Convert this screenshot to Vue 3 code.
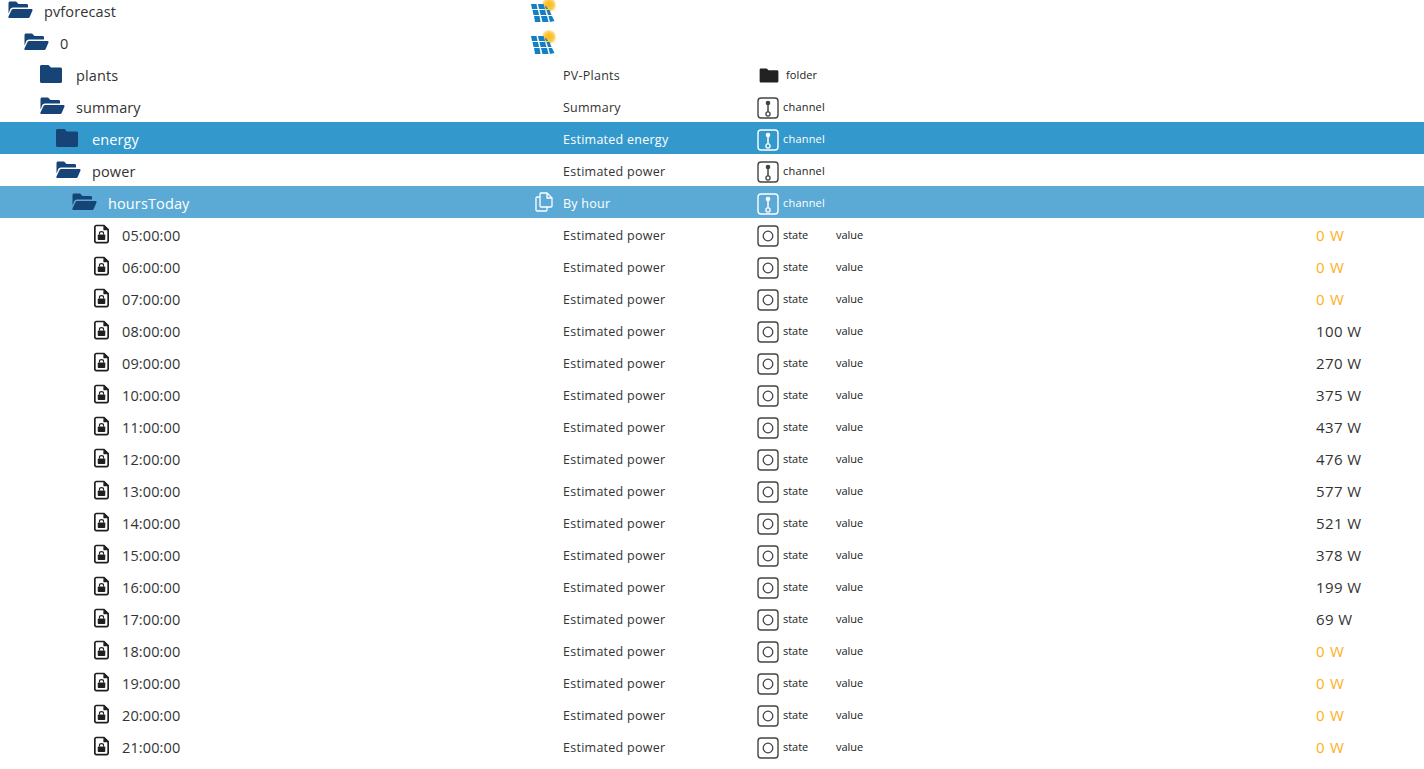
<script setup>
const folderOpen = 'M0.500 3 C0.500 2.200 1.200 1.500 2 1.500 H8 L10.500 4 H18.500 C19.500 4 20 4.700 20 5.500 V7.500 H5 C3.700 7.500 2.700 8.200 2.200 9.400 L0.500 13.500 Z M5.200 9 H23.500 C24.300 9 24.700 9.700 24.500 10.400 L21.800 16.800 C21.500 17.600 20.800 18 20 18 H1.300 C.5 18 .1 17.300 .4 16.600 L3.400 10.200 C3.800 9.400 4.500 9 5.200 9 Z'
const hours = [
  ['05:00:00', '0 W', true], ['06:00:00', '0 W', true], ['07:00:00', '0 W', true],
  ['08:00:00', '100 W'], ['09:00:00', '270 W'], ['10:00:00', '375 W'], ['11:00:00', '437 W'],
  ['12:00:00', '476 W'], ['13:00:00', '577 W'], ['14:00:00', '521 W'], ['15:00:00', '378 W'],
  ['16:00:00', '199 W'], ['17:00:00', '69 W'], ['18:00:00', '0 W', true], ['19:00:00', '0 W', true],
  ['20:00:00', '0 W', true], ['21:00:00', '0 W', true]
]
const folders = [
  { name: 'pvforecast', level: 0, open: true, logo: true },
  { name: '0', level: 1, open: true, logo: true },
  { name: 'plants', level: 2, desc: 'PV-Plants', type: 'folder' },
  { name: 'summary', level: 2, open: true, desc: 'Summary', type: 'channel' },
  { name: 'energy', level: 3, desc: 'Estimated energy', type: 'channel', cls: 'selected' },
  { name: 'power', level: 3, open: true, desc: 'Estimated power', type: 'channel' },
  { name: 'hoursToday', level: 4, open: true, desc: 'By hour', type: 'channel', cls: 'hovered', copy: true }
]
</script>

<template>
  <div class="tree">
    <div v-for="f in folders" :key="f.name" class="row" :class="f.cls">
      <div class="name-cell" :class="'level-' + f.level">
        <svg class="folder" viewBox="0 0 28 20">
          <path v-if="f.open" :d="folderOpen" />
          <path v-else d="M0 2.500 C0 1.600 .7 1 1.500 1 H8.500 L11 3.500 H20.500 C21.400 3.500 22 4.200 22 5 V17.500 C22 18.400 21.300 19 20.500 19 H1.500 C.7 19 0 18.400 0 17.500 Z" />
        </svg>
        <span class="name">{{ f.name }}</span>
      </div>
      <div class="logo-cell">
        <svg v-if="f.logo" class="logo" viewBox="0 -2 26 26">
          <defs>
            <radialGradient id="sun">
              <stop offset="0" stop-color="#fbb81f" />
              <stop offset="0.6" stop-color="#fcc63f" />
              <stop offset="1" stop-color="#fde9a8" />
            </radialGradient>
          </defs>
          <circle cx="19" cy="5" r="7" fill="url(#sun)" />
          <g fill="#1380c4">
            <path d="M1 4 H6.500 L7.500 9 H2 Z" /><path d="M8 4 H13.500 L15 9 H9 Z" /><path d="M15 6 H16 L18 9 H16 Z" />
            <path d="M2.500 10 H8 L9 15 H3.500 Z" /><path d="M9.500 10 H15 L16.500 15 H10.500 Z" /><path d="M16.500 10 H19.500 L21.500 15 H18 Z" />
            <path d="M4 16 H9.500 L10.500 22 H5 Z" /><path d="M11 16 H17 L18.500 22 H12.500 Z" /><path d="M18.500 16 H22 L24.500 21 L20 22 Z" />
          </g>
        </svg>
        <svg v-if="f.copy" class="copy" viewBox="0 0 18 20" fill="none" stroke="currentColor" stroke-width="1.300">
          <path d="M6 1 H12 L17 6 V14 C17 14.600 16.600 15 16 15 H6 C5.400 15 5 14.600 5 14 V2 C5 1.400 5.400 1 6 1 Z M12 1 V6 H17" />
          <path d="M5 5 H2 C1.400 5 1 5.400 1 6 V18 C1 18.600 1.400 19 2 19 H11 C11.600 19 12 18.600 12 18 V15" />
        </svg>
      </div>
      <div class="desc">{{ f.desc }}</div>
      <div class="type-cell">
        <template v-if="f.type === 'folder'">
          <svg class="type-folder" viewBox="0 0 20 16"><path d="M0 2 C0 1 .7 .5 1.500 .5 H7.500 L9.500 2.500 H18.500 C19.400 2.500 20 3.200 20 4 V14 C20 14.900 19.300 15.500 18.500 15.500 H1.500 C.7 15.500 0 14.900 0 14 Z" /></svg>
          <span class="type-label">folder</span>
        </template>
        <template v-else-if="f.type">
          <svg class="type-icon" viewBox="0 0 22 22" fill="none" stroke="currentColor">
            <rect x="1" y="1" width="20" height="20" rx="3" stroke-width="1.400" />
            <circle cx="11" cy="6" r="2.300" fill="currentColor" stroke="none" />
            <path d="M11 6 V15" stroke-width="1.500" />
            <circle cx="11" cy="17" r="2.100" stroke-width="1.300" />
          </svg>
          <span class="type-text">{{ f.type }}</span>
        </template>
      </div>
    </div>

    <div v-for="h in hours" :key="h[0]" class="row">
      <div class="name-cell file-cell">
        <svg class="file" viewBox="0 0 16 20">
          <path fill-rule="evenodd" d="M2.500 0 H11 L16 5 V17.500 C16 18.900 14.900 20 13.500 20 H2.500 C1.100 20 0 18.900 0 17.500 V2.500 C0 1.100 1.100 0 2.500 0 Z M2.500 1.800 C2 1.800 1.800 2 1.800 2.500 V17.500 C1.800 18 2 18.200 2.500 18.200 H13.500 C14 18.200 14.200 18 14.200 17.500 V6 H10 V1.800 Z" fill="#1f1f1f" />
          <rect x="4" y="10.500" width="8" height="6" rx="0.800" fill="#1f1f1f" />
          <path d="M5.800 10.500 V9.300 C5.800 6.900 10.200 6.900 10.200 9.300 V10.500" fill="none" stroke="#1f1f1f" stroke-width="1.200" />
        </svg>
        <span class="name">{{ h[0] }}</span>
      </div>
      <div class="logo-cell"></div>
      <div class="desc">Estimated power</div>
      <div class="type-cell">
        <svg class="type-icon" viewBox="0 0 22 22" fill="none" stroke="currentColor">
          <rect x="1" y="1" width="20" height="20" rx="3" stroke-width="1.400" />
          <circle cx="11" cy="11" r="4.800" stroke-width="1.300" />
        </svg>
        <span class="state">state</span>
        <span class="role">value</span>
      </div>
      <div class="value" :class="{ zero: h[2] }">{{ h[1] }}</div>
    </div>
  </div>
</template>

<style>
html, body { margin: 0; background: #fff; overflow: hidden; }
</style>

<style scoped>
.tree {
  margin-top: -6px;
  font-family: "Open Sans", "Noto Sans", sans-serif;
  color: #333;
}
.row {
  display: grid;
  grid-template-columns: 530px 33px 194px 559px 1fr;
  height: 32px;
  align-items: center;
}
.row.selected { background: #3399cc; color: #fff; }
.row.hovered { background: #5baad6; color: #fff; }
.name-cell { display: flex; align-items: center; gap: 8px; }
.level-0 { padding-left: 8px; }
.level-1 { padding-left: 24px; }
.level-2 { padding-left: 40px; }
.level-3 { padding-left: 56px; }
.level-4 { padding-left: 72px; }
.folder { width: 28px; height: 20px; fill: #164477; flex: none; }
.name { font-size: 14.500px; letter-spacing: 0.120px; padding-top: 2px; }
.file-cell { padding-left: 94px; gap: 13px; }
.file { width: 15px; height: 20px; flex: none; }
.logo-cell { display: flex; align-items: center; height: 100%; }
.logo { width: 26px; height: 26px; margin-top: 2px; }
.copy { width: 18px; height: 20px; margin-left: 5px; }
.desc { font-size: 12.500px; letter-spacing: 0.260px; white-space: nowrap; padding-top: 2px; }
.type-cell { display: flex; align-items: center; font-size: 11px; color: #222; }
.selected .type-cell, .hovered .type-cell { color: #fff; }
.type-icon { width: 22px; height: 22px; flex: none; color: #444; margin-top: 4px; }
.selected .type-icon, .hovered .type-icon { color: #fff; }
.type-text { margin-left: 4px; letter-spacing: 0.200px; }
.type-folder { width: 20px; height: 15px; margin-left: 2px; margin-top: 3px; fill: #222; flex: none; }
.type-label { margin-left: 7px; letter-spacing: 0.100px; }
.state { margin-left: 4px; width: 53px; letter-spacing: -0.050px; }
.role { letter-spacing: -0.050px; }
.value { font-size: 15px; letter-spacing: 0.400px; color: #333; padding-top: 2px; }
.value.zero { color: #fcaf1c; letter-spacing: 0.800px; }
</style>
